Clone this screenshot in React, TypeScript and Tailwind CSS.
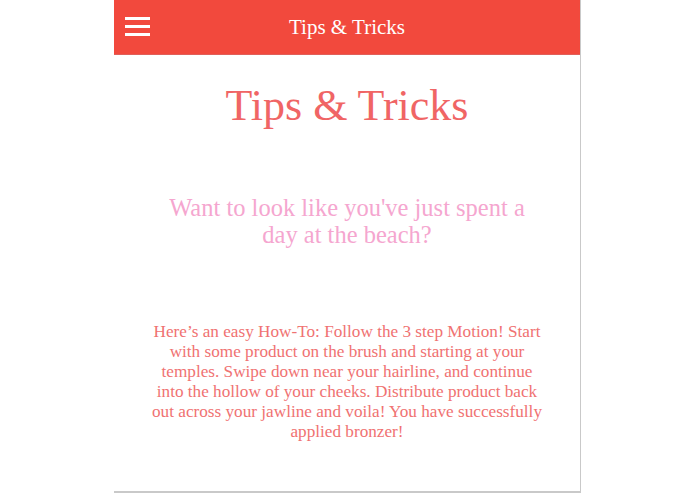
export default function App() {
  return (
    <div className="min-h-screen bg-white" style={{ fontFamily: '"Liberation Serif", serif' }}>
      <div className="mx-auto w-[467px] h-[493px] border-r border-b-2 border-[#c9c9c9] flex flex-col">
        {/* Header bar */}
        <header className="h-[55px] bg-[#f2493d] border-b border-[#e0605a] flex items-center relative">
          <button className="absolute left-[11px] top-[17px] flex flex-col gap-[5px]">
            <span className="block w-[25px] h-[3px] bg-white" />
            <span className="block w-[25px] h-[3px] bg-white" />
            <span className="block w-[25px] h-[3px] bg-white" />
          </button>
          <h1 className="w-full text-center text-white text-[21px] pt-[1px]">Tips &amp; Tricks</h1>
        </header>

        <main className="flex flex-col items-center text-center">
          <h2 className="mt-[29px] text-[44px] leading-none text-[#f06565]">Tips &amp; Tricks</h2>
          <p className="mt-[66px] w-[372px] text-[24.5px] leading-[27px] text-[#f5a6cf]">
            Want to look like you've just spent a day at the beach?
          </p>
          <p className="mt-[74px] w-[398px] text-[17.2px] leading-[20px] text-[#f07272]">
            Here’s an easy How-To: Follow the 3 step Motion! Start with some product on the brush and
            starting at your temples. Swipe down near your hairline, and continue into the hollow of
            your cheeks. Distribute product back out across your jawline and voila! You have
            successfully applied bronzer!
          </p>
        </main>
      </div>
    </div>
  );
}
